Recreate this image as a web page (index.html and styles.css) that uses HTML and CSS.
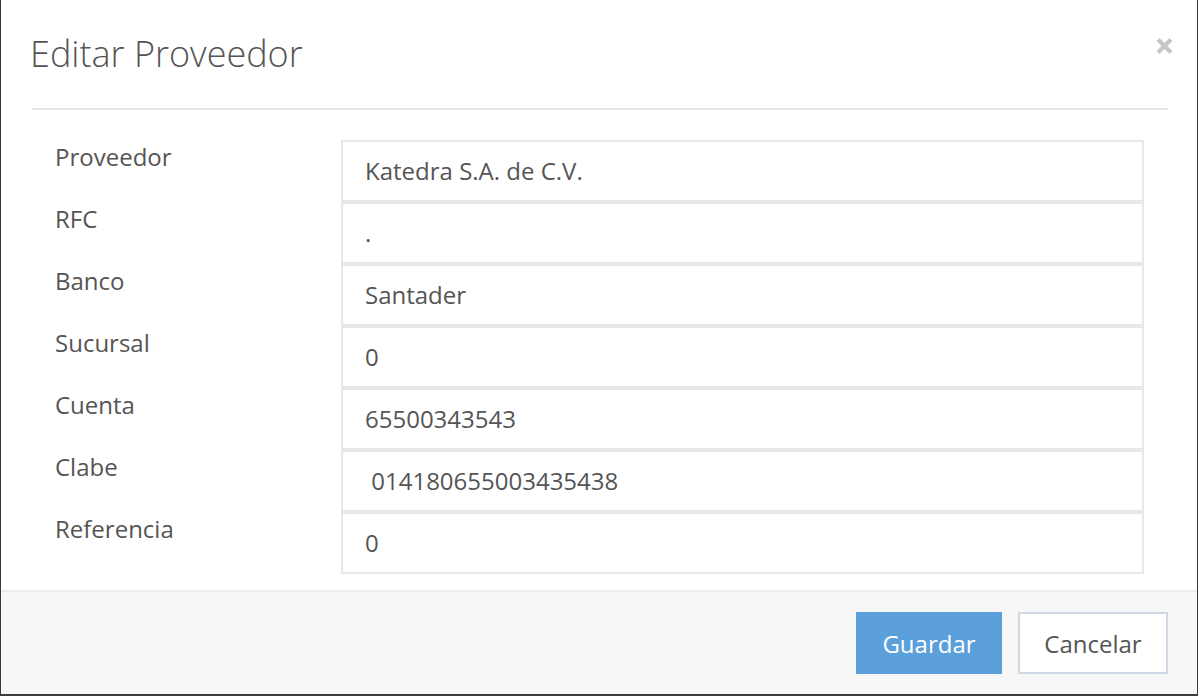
FILE: index.html
```html
<!DOCTYPE html>
<html lang="es">
<head>
<meta charset="utf-8">
<title>Editar Proveedor</title>
<link rel="stylesheet" href="styles.css">
</head>
<body>
<div class="modal">
  <div class="modal-header">
    <h1 class="modal-title">Editar Proveedor</h1>
    <button class="close" type="button" aria-label="Cerrar">
      <svg width="17" height="18" viewBox="0 0 17 18"><path d="M2 2.5 L15 15.5 M15 2.5 L2 15.5" stroke="#c6c6c6" stroke-width="4.2" stroke-linecap="butt"/></svg>
    </button>
  </div>
  <div class="modal-body">
    <div class="row"><label class="lbl">Proveedor</label><div class="field">Katedra S.A. de C.V.</div></div>
    <div class="row"><label class="lbl">RFC</label><div class="field">.</div></div>
    <div class="row"><label class="lbl">Banco</label><div class="field">Santader</div></div>
    <div class="row"><label class="lbl">Sucursal</label><div class="field">0</div></div>
    <div class="row"><label class="lbl">Cuenta</label><div class="field">65500343543</div></div>
    <div class="row"><label class="lbl">Clabe</label><div class="field">&nbsp;014180655003435438</div></div>
    <div class="row"><label class="lbl">Referencia</label><div class="field">0</div></div>
  </div>
  <div class="modal-footer">
    <button class="btn btn-primary" type="button">Guardar</button>
    <button class="btn btn-default" type="button">Cancelar</button>
  </div>
</div>
</body>
</html>
```

FILE: styles.css
```css
html, body {
  margin: 0;
  padding: 0;
  background: #3b3b3b;
}
body {
  font-family: "Open Sans", "Noto Sans", sans-serif;
  color: #555;
  height: 696px;
  overflow: hidden;
}
.modal {
  width: 1196px;
  height: 694px;
  margin-left: 1px;
  background: #fff;
  display: flex;
  flex-direction: column;
  box-sizing: border-box;
}
.modal-header {
  margin: 0 29px 0 31px;
  padding: 30px 0 30px;
  border-bottom: 2px solid #e5e5e5;
  display: flex;
  align-items: flex-start;
  justify-content: space-between;
}
.modal-title {
  margin: 0 0 0 -2px;
  font-size: 36px;
  font-weight: 300;
  line-height: 48px;
  color: #555;
}
.close {
  border: 0;
  background: none;
  padding: 0;
  margin: 7px -5px 0 0;
  width: 17px;
  height: 18px;
  display: block;
}
.close svg { display: block; }
.modal-body {
  padding: 30px 53px 0 54px;
}
.row {
  display: grid;
  grid-template-columns: 286px 1fr;
  height: 62px;
}
.lbl {
  font-size: 24px;
  line-height: 32px;
  padding-top: 1px;
  color: #555;
}
.field {
  border: 2px solid #e8e8e8;
  height: 62px;
  box-sizing: border-box;
  padding: 0 22px;
  font-size: 24px;
  line-height: 58px;
  color: #555;
  white-space: pre;
}
.modal-footer {
  margin-top: auto;
  height: 104px;
  box-sizing: border-box;
  border-top: 2px solid #ececec;
  background: #f7f7f7;
  display: flex;
  justify-content: flex-end;
  align-items: center;
  gap: 16px;
  padding: 0 29px 0 0;
}
.btn {
  height: 62px;
  font-family: inherit;
  font-size: 24px;
  padding: 0;
  box-sizing: border-box;
  cursor: pointer;
}
.btn-primary {
  width: 146px;
  background: #5b9fdb;
  border: 2px solid #5b9fdb;
  color: #fff;
}
.btn-default {
  width: 150px;
  background: #fff;
  border: 2px solid #cfd9e4;
  color: #555;
}
```
